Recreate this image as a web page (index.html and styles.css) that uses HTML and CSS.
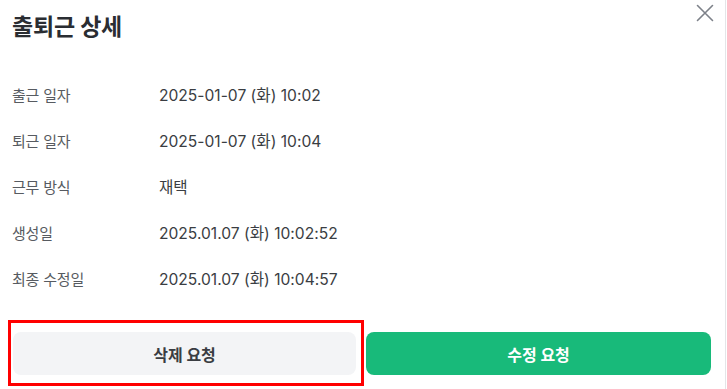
FILE: index.html
```html
<!DOCTYPE html>
<html lang="ko">
<head>
<meta charset="utf-8">
<link rel="stylesheet" href="styles.css">
</head>
<body>
<div class="modal">
  <header class="head">
    <h1 class="title">출퇴근 상세</h1>
    <button class="close" aria-label="닫기">
      <svg width="18" height="18" viewBox="0 0 18 18"><path d="M1.5 1.5 L16.5 16.5 M16.5 1.5 L1.5 16.5" stroke="#7d8189" stroke-width="1.6" stroke-linecap="round" fill="none"/></svg>
    </button>
  </header>
  <dl class="rows">
    <div class="row"><dt>출근 일자</dt><dd>2025-01-07 (화) 10:02</dd></div>
    <div class="row"><dt>퇴근 일자</dt><dd>2025-01-07 (화) 10:04</dd></div>
    <div class="row"><dt>근무 방식</dt><dd>재택</dd></div>
    <div class="row"><dt>생성일</dt><dd>2025.01.07 (화) 10:02:52</dd></div>
    <div class="row"><dt>최종 수정일</dt><dd>2025.01.07 (화) 10:04:57</dd></div>
  </dl>
  <div class="actions">
    <button class="btn btn-gray">삭제 요청<span class="mark"></span></button>
    <button class="btn btn-green">수정 요청</button>
  </div>
</div>
</body>
</html>
```
FILE: styles.css
```css
html, body {
  margin: 0;
  padding: 0;
  background: #ffffff;
}
body {
  font-family: Inter, "Noto Sans CJK KR", sans-serif;
  color: #333;
}
.modal {
  width: 725px;
  height: 389px;
  border-right: 1px solid #e4e5e8;
  box-sizing: content-box;
  position: relative;
}
.head {
  display: flex;
  justify-content: space-between;
  align-items: flex-start;
  padding: 12px 11px 0 12px;
}
.title {
  margin: 0;
  font-size: 23px;
  line-height: 30px;
  font-weight: 700;
  color: #2a2d32;
  letter-spacing: -0.2px;
}
.close {
  border: 0;
  background: none;
  padding: 0;
  margin-top: -8px;
  width: 18px;
  height: 18px;
  display: flex;
}
.rows {
  margin: 43px 0 0 0;
  padding: 0 12px;
  display: flex;
  flex-direction: column;
  gap: 24px;
}
.row {
  display: flex;
  line-height: 22px;
  font-size: 15px;
}
.row dt {
  width: 147px;
  color: #575b61;
  letter-spacing: -0.2px;
}
.row dd {
  margin: 0;
  color: #3a3d42;
  font-size: 15.6px;
}
.actions {
  display: flex;
  gap: 10px;
  padding: 0 14px 0 13px;
  margin-top: 41px;
}
.btn {
  flex: 1;
  height: 43px;
  border: 0;
  border-radius: 8px;
  font-family: Inter, "Noto Sans CJK KR", sans-serif;
  font-size: 16px;
  font-weight: 700;
  position: relative;
}
.btn-gray {
  background: #f3f4f6;
  color: #3a3d42;
  flex: 0 0 343px;
}
.btn-green {
  background: #18ba7a;
  color: #ffffff;
  flex: 0 0 345px;
}
.mark {
  position: absolute;
  left: -5px;
  top: -12px;
  right: -8px;
  bottom: -11px;
  border: 3px solid #ff0000;
}
```
